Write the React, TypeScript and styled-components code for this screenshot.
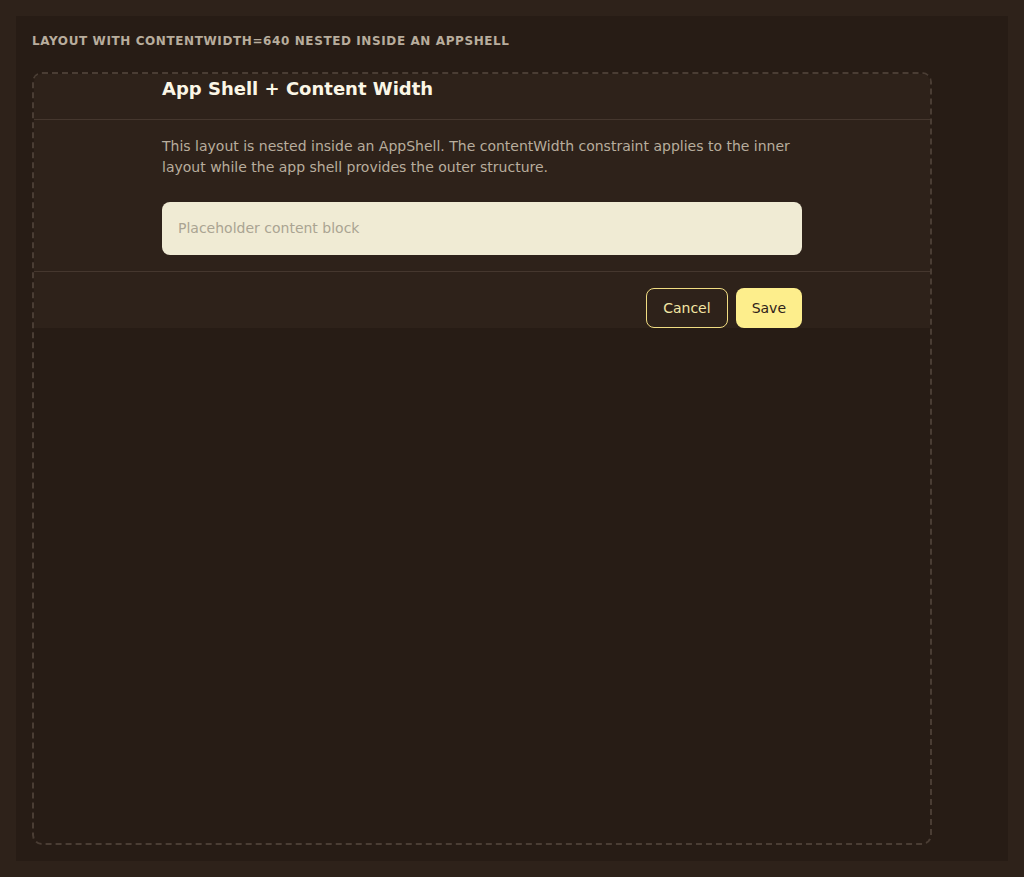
import styled, { createGlobalStyle } from "styled-components";

const GlobalStyle = createGlobalStyle`
  html, body {
    margin: 0;
    padding: 0;
    background: #2e221a;
    font-family: "DejaVu Sans", "Liberation Sans", sans-serif;
  }
  * {
    box-sizing: border-box;
  }
`;

const Page = styled.div`
  padding: 16px;
  min-height: 100vh;
  display: flex;
`;

const Panel = styled.section`
  flex: 1;
  display: flex;
  flex-direction: column;
  background: #271c15;
  padding: 16px;
`;

const Caption = styled.div`
  font-size: 12px;
  font-weight: 700;
  letter-spacing: 0.6px;
  text-transform: uppercase;
  color: #b8ad9d;
  line-height: 18px;
  margin: 0 0 22px;
`;

const Shell = styled.div`
  flex: 1;
  width: 900px;
  border: 2px dashed #4a3d34;
  border-radius: 10px;
  overflow: hidden;
`;

const Layout = styled.div`
  background: #2e221a;
  display: flex;
  flex-direction: column;
`;

const HeaderBand = styled.div`
  border-bottom: 1px solid #45372e;
`;

const FooterBand = styled.div`
  border-top: 1px solid #45372e;
`;

const Inner = styled.div`
  width: 640px;
  margin: 0 auto;
`;

const Header = styled(Inner)`
  padding: 3px 0 18px;
`;

const Title = styled.h1`
  margin: 0;
  font-size: 18px;
  font-weight: 700;
  line-height: 24px;
  color: #fbf6e6;
`;

const Body = styled(Inner)`
  padding: 16px 0;
`;

const Text = styled.p`
  margin: 0 0 24px;
  font-size: 14px;
  line-height: 21px;
  color: #b8ad9d;
`;

const Block = styled.div`
  padding: 16px;
  border-radius: 8px;
  background: #f0ebd4;
  color: #aaa492;
  font-size: 14px;
  line-height: 21px;
`;

const Footer = styled(Inner)`
  display: flex;
  justify-content: flex-end;
  gap: 8px;
  padding-top: 16px;
`;

const Button = styled.button<{ $primary?: boolean }>`
  height: 40px;
  padding: 0 16px;
  border-radius: 8px;
  font-family: inherit;
  font-size: 14px;
  cursor: pointer;
  border: ${(p) => (p.$primary ? "none" : "1px solid #f0dc82")};
  background: ${(p) => (p.$primary ? "#fdee8c" : "transparent")};
  color: ${(p) => (p.$primary ? "#2e221a" : "#f3e6a4")};
`;

export default function App() {
  return (
    <>
      <GlobalStyle />
      <Page>
        <Panel>
          <Caption>Layout with contentWidth=640 nested inside an AppShell</Caption>
          <Shell>
            <Layout>
              <HeaderBand>
                <Header>
                  <Title>App Shell + Content Width</Title>
                </Header>
              </HeaderBand>
              <Body>
                <Text>
                  This layout is nested inside an AppShell. The contentWidth
                  constraint applies to the inner layout while the app shell
                  provides the outer structure.
                </Text>
                <Block>Placeholder content block</Block>
              </Body>
              <FooterBand>
                <Footer>
                  <Button>Cancel</Button>
                  <Button $primary>Save</Button>
                </Footer>
              </FooterBand>
            </Layout>
          </Shell>
        </Panel>
      </Page>
    </>
  );
}
